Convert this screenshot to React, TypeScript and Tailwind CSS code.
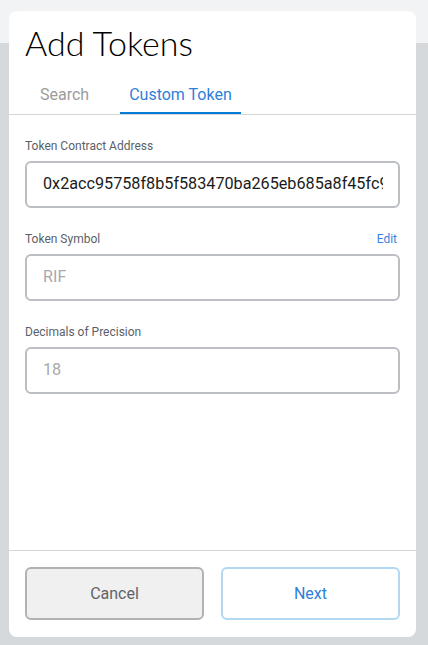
import { useState } from "react";

const Field = ({ label, value, muted, edit }: any) => {
  return (
    <div className="flex flex-col">
      <div className="flex justify-between items-center h-[16px] mb-[7px] text-[12px] leading-[16px]">
        <span className="text-[#5b5f69]">{label}</span>
        {edit && <span className="text-[#3b82e0] pr-[3px]">Edit</span>}
      </div>
      <div className="h-[47px] rounded-[6px] border-2 border-[#bbbec2] flex items-center pl-[16px] pr-[15px]">
        <span
          className={`${muted ? "text-[#a9aaac]" : "text-[#1b1b1b]"} text-[16.2px] block overflow-hidden whitespace-nowrap`}
        >
          {value}
        </span>
      </div>
    </div>
  );
};

const App = () => {
  const [tab, setTab] = useState(1);

  return (
    <div
      className="relative w-[428px] h-[645px] overflow-hidden bg-[#d6d9dc]"
      style={{ fontFamily: "Roboto, 'Liberation Sans', sans-serif" }}
    >
      <div className="h-[43px] bg-[#f2f3f4]" />

      {/* modal */}
      <div className="absolute left-[9px] top-[11px] w-[407px] h-[626px] rounded-[8px] bg-white flex flex-col">
        <div className="border-b border-[#d3d5d8]">
          <h1
            className="pl-[16px] pt-[12px] text-[34px] leading-[40px] font-light text-black"
            style={{ fontFamily: "Lato, sans-serif" }}
          >
            Add Tokens
          </h1>
          <div className="flex pl-[22px] gap-[22px] mt-[15px] h-[36px] text-[16px]">
            {["Search", "Custom Token"].map((t, i) => (
              <button
                key={t}
                onClick={() => setTab(i)}
                className={`px-[9px] flex items-center border-b-2 ${
                  tab === i
                    ? "border-[#037dd6] text-[#2f80d8]"
                    : "border-transparent text-[#9b9b9b]"
                }`}
              >
                {t}
              </button>
            ))}
          </div>
        </div>

        <div className="px-[16px] pt-[23px] flex flex-col gap-[23px]">
          <Field
            label="Token Contract Address"
            value="0x2acc95758f8b5f583470ba265eb685a8f45fc9d5"
          />
          <Field label="Token Symbol" value="RIF" muted edit />
          <Field label="Decimals of Precision" value="18" muted />
        </div>

        <div className="mt-auto border-t border-[#d3d5d8] px-[16px] pt-[16px] pb-[17px] flex gap-[17px]">
          <button className="flex-1 h-[53px] rounded-[6px] border-2 border-[#b2b2b2] bg-[#f0f0f0] text-[#5f6369] text-[16px]">
            Cancel
          </button>
          <button className="flex-1 h-[53px] rounded-[6px] border-2 border-[#b3d8f3] bg-white text-[#2f80d8] text-[16px]">
            Next
          </button>
        </div>
      </div>
    </div>
  );
};

export default App;
